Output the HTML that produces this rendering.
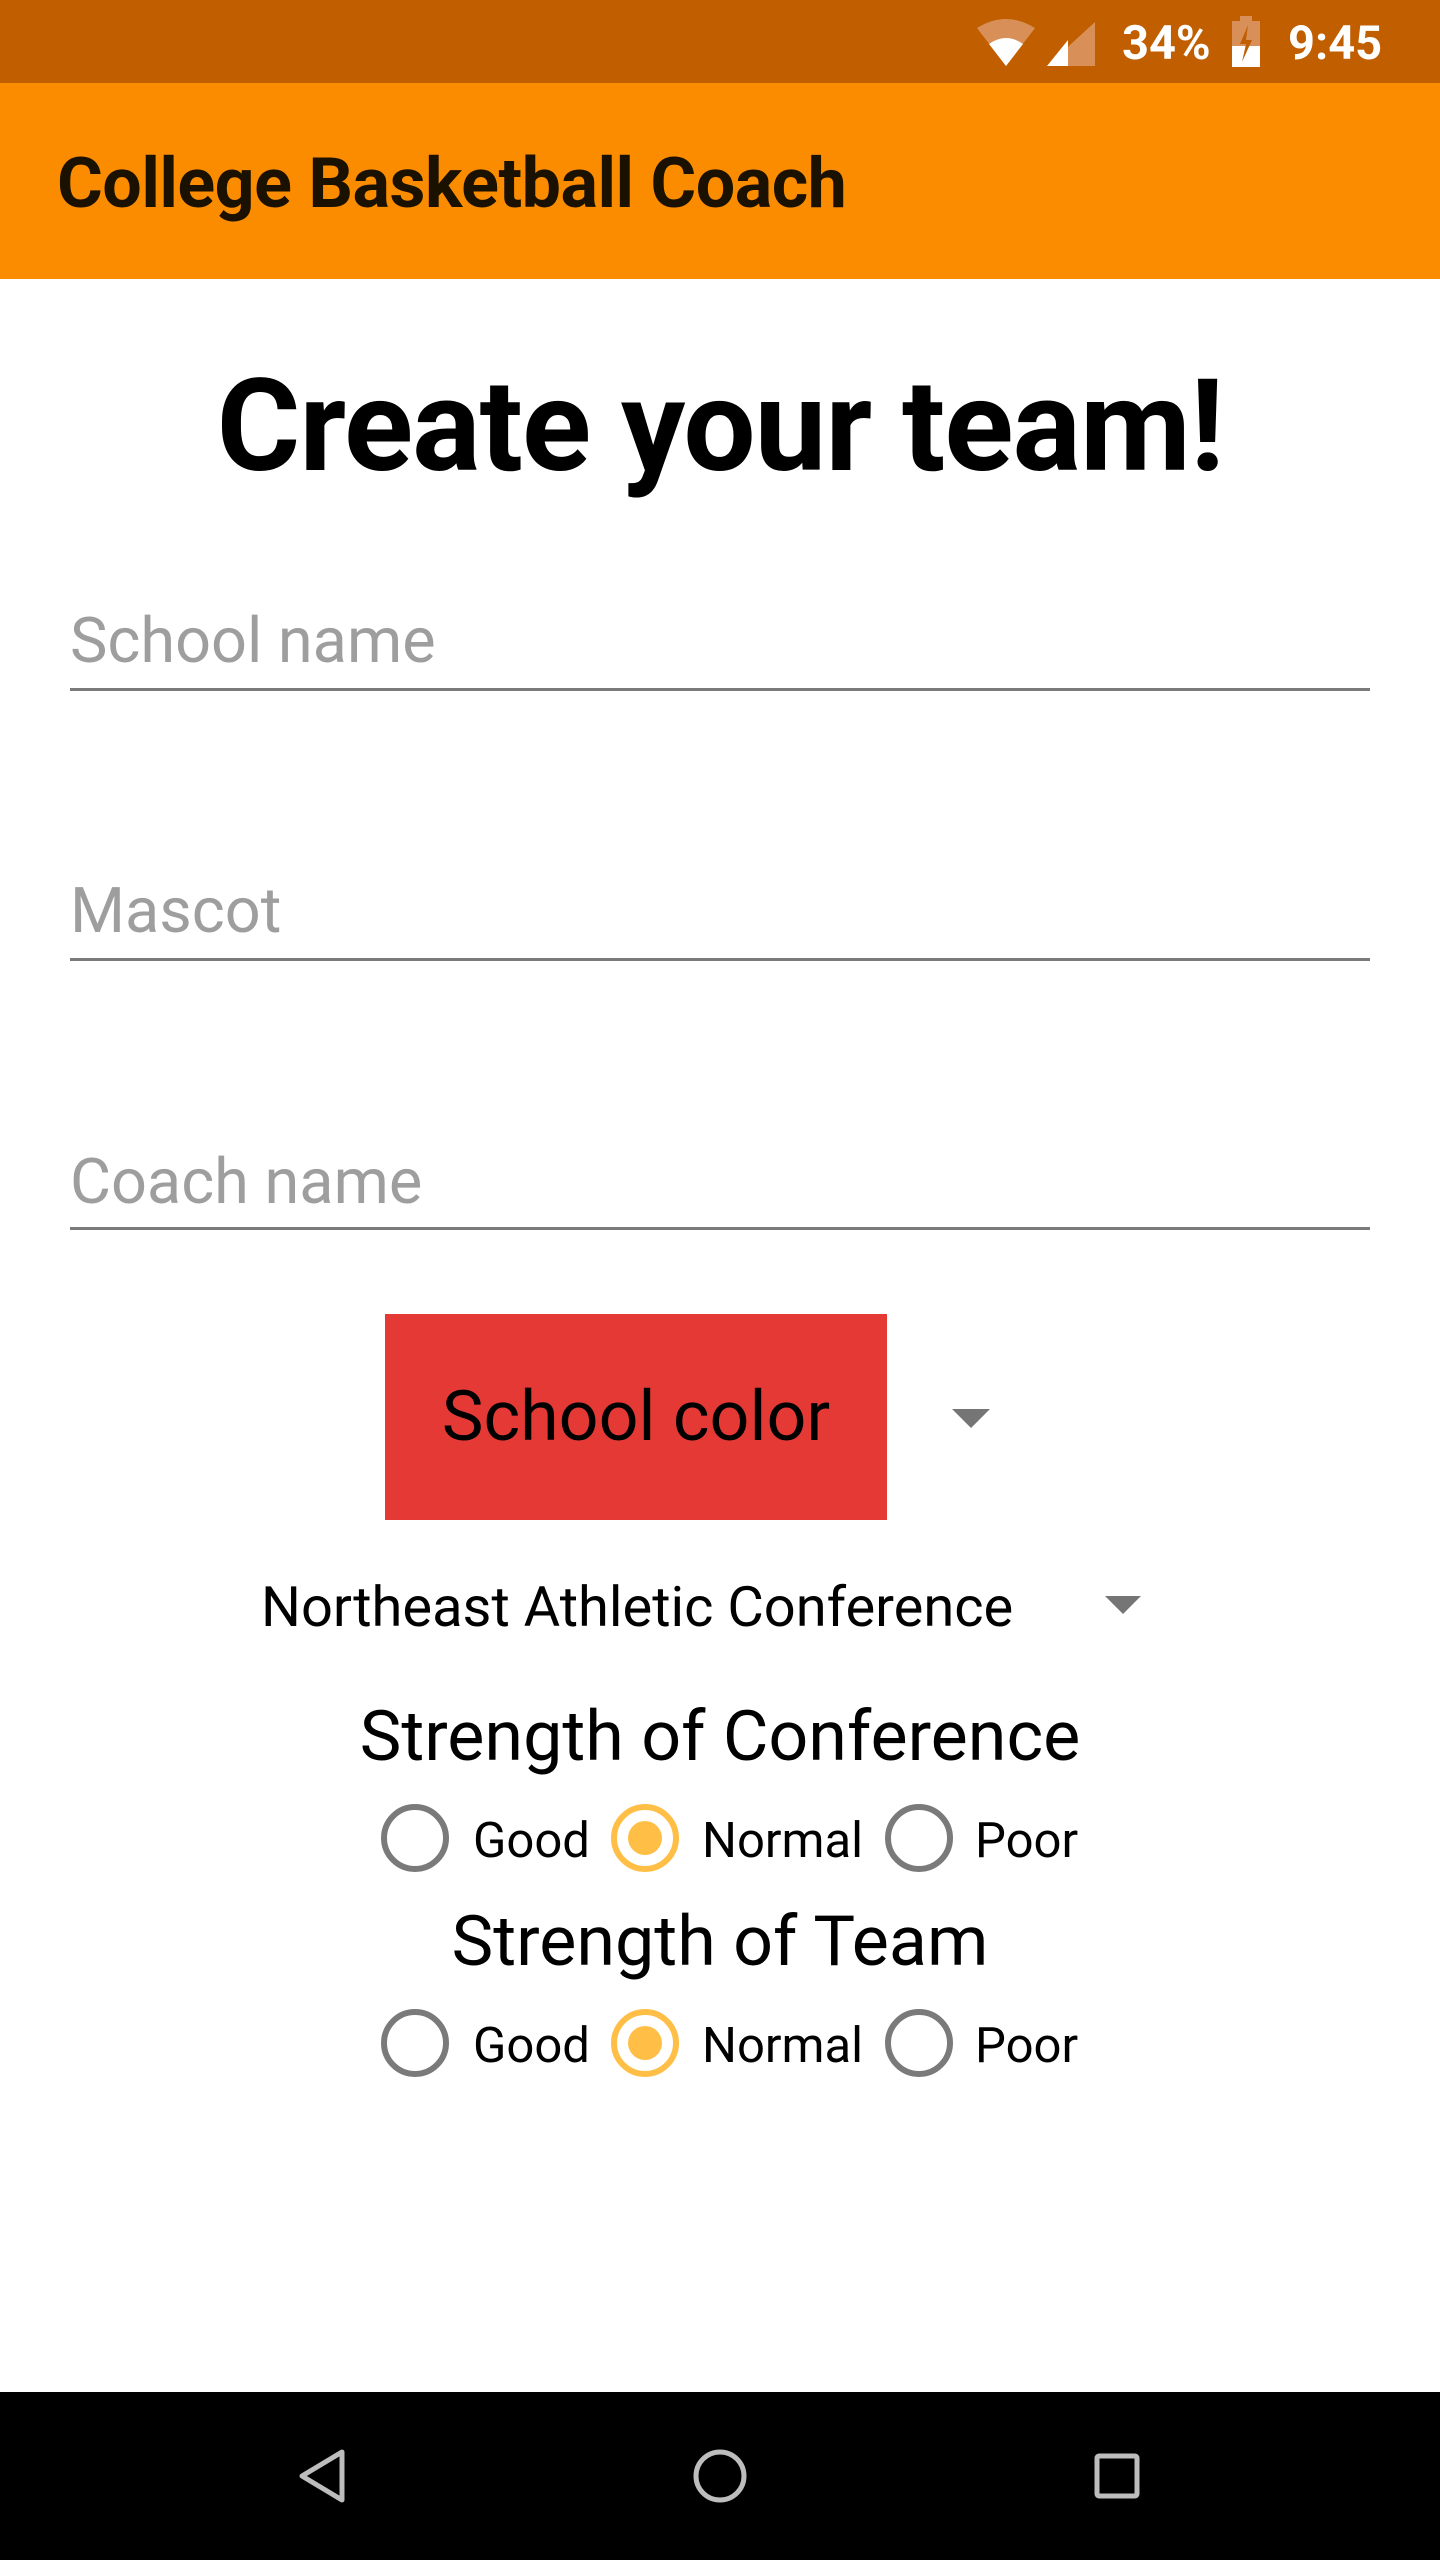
<!DOCTYPE html>
<html><head><meta charset="utf-8"><style>
*{margin:0;padding:0;box-sizing:border-box}
body{width:1440px;height:2560px;position:relative;background:#fff;font-family:"Roboto","Liberation Sans",sans-serif;overflow:hidden}
.a{position:absolute;white-space:nowrap}
.lbl{font-size:63px;color:#9e9e9e;left:70px}
.ul{position:absolute;left:70px;width:1300px;height:3px;background:#7a7a7a}
.rl{font-size:49px;color:#000}
</style></head><body>
<div class="a" style="left:0;top:0;width:1440px;height:83px;background:#c05e00"></div>
<svg class="a" style="left:975px;top:18px" width="125" height="50" viewBox="0 0 125 50">
<path d="M2 10 Q31 -8 60 10 L31 48 Z" fill="#d99058"/>
<path d="M14 26 Q31 14 48 26 L31 48 Z" fill="#fff"/>
<path d="M120 4 L120 48 L72 48 Z" fill="#d99058"/>
<path d="M93 22 L93 48 L72 48 Z" fill="#fff"/>
</svg>
<div class="a" style="left:1122px;top:16px;font-size:47px;color:#fff;font-weight:bold">34%</div>
<svg class="a" style="left:1230px;top:16px" width="32" height="52" viewBox="0 0 32 52">
<rect x="10" y="0" width="12" height="5" fill="#d99058"/>
<rect x="2" y="5" width="28" height="46" fill="#d99058"/>
<rect x="2" y="30" width="28" height="21" fill="#fff"/>
<path d="M18 9 L10 28 L16 28 L12 46 L22 24 L16 24 Z" fill="#c05e00"/>
</svg>
<div class="a" style="left:1288px;top:16px;font-size:47px;color:#fff;font-weight:bold">9:45</div>
<div class="a" style="left:0;top:83px;width:1440px;height:196px;background:#fb8c00"></div>
<div class="a" style="left:57px;top:143px;font-size:70px;font-weight:bold;color:#1a1100;letter-spacing:-0.5px">College Basketball Coach</div>
<div class="a" style="left:0;width:1440px;text-align:center;top:352px;font-size:128px;font-weight:bold;color:#000;letter-spacing:-1px">Create your team!</div>
<div class="a lbl" style="top:605px">School name</div>
<div class="ul" style="top:688px"></div>
<div class="a lbl" style="top:875px">Mascot</div>
<div class="ul" style="top:958px"></div>
<div class="a lbl" style="top:1146px">Coach name</div>
<div class="ul" style="top:1227px"></div>
<div class="a" style="left:385px;top:1314px;width:502px;height:206px;background:#e53935"></div>
<div class="a" style="left:385px;width:502px;text-align:center;top:1376px;font-size:70px;color:#000">School color</div>
<svg class="a" style="left:952px;top:1409px" width="38" height="19"><path d="M0 0H38L19 19Z" fill="#757575"/></svg>
<div class="a" style="left:261px;top:1574px;font-size:56px;color:#000">Northeast Athletic Conference</div>
<svg class="a" style="left:1105px;top:1596px" width="36" height="18"><path d="M0 0H36L18 18Z" fill="#757575"/></svg>
<div class="a" style="left:0;width:1440px;text-align:center;top:1696px;font-size:70px;color:#000">Strength of Conference</div>
<div class="a" style="left:0;width:1440px;text-align:center;top:1901px;font-size:70px;color:#000">Strength of Team</div>
<svg class="a" style="left:0;top:0" width="1440" height="2560">
<g fill="none" stroke-width="6">
<circle cx="415" cy="1838" r="31" stroke="#7a7a7a"/>
<circle cx="645" cy="1838" r="31" stroke="#ffbf47"/>
<circle cx="919" cy="1838" r="31" stroke="#7a7a7a"/>
<circle cx="415" cy="2043" r="31" stroke="#7a7a7a"/>
<circle cx="645" cy="2043" r="31" stroke="#ffbf47"/>
<circle cx="919" cy="2043" r="31" stroke="#7a7a7a"/>
</g>
<circle cx="645" cy="1838" r="17" fill="#ffbf47"/>
<circle cx="645" cy="2043" r="17" fill="#ffbf47"/>
</svg>
<div class="a rl" style="left:473px;top:1812px">Good</div>
<div class="a rl" style="left:702px;top:1812px">Normal</div>
<div class="a rl" style="left:975px;top:1812px">Poor</div>
<div class="a rl" style="left:473px;top:2017px">Good</div>
<div class="a rl" style="left:702px;top:2017px">Normal</div>
<div class="a rl" style="left:975px;top:2017px">Poor</div>
<div class="a" style="left:0;top:2392px;width:1440px;height:168px;background:#000"></div>
<svg class="a" style="left:0;top:2392px" width="1440" height="168">
<g fill="none" stroke="#bdbdbd" stroke-width="5" stroke-linejoin="round">
<path d="M342 60 L342 108 L302 84 Z"/>
<circle cx="720" cy="84" r="24"/>
<rect x="1097" y="64" width="40" height="40" rx="2"/>
</g>
</svg>
</body></html>
